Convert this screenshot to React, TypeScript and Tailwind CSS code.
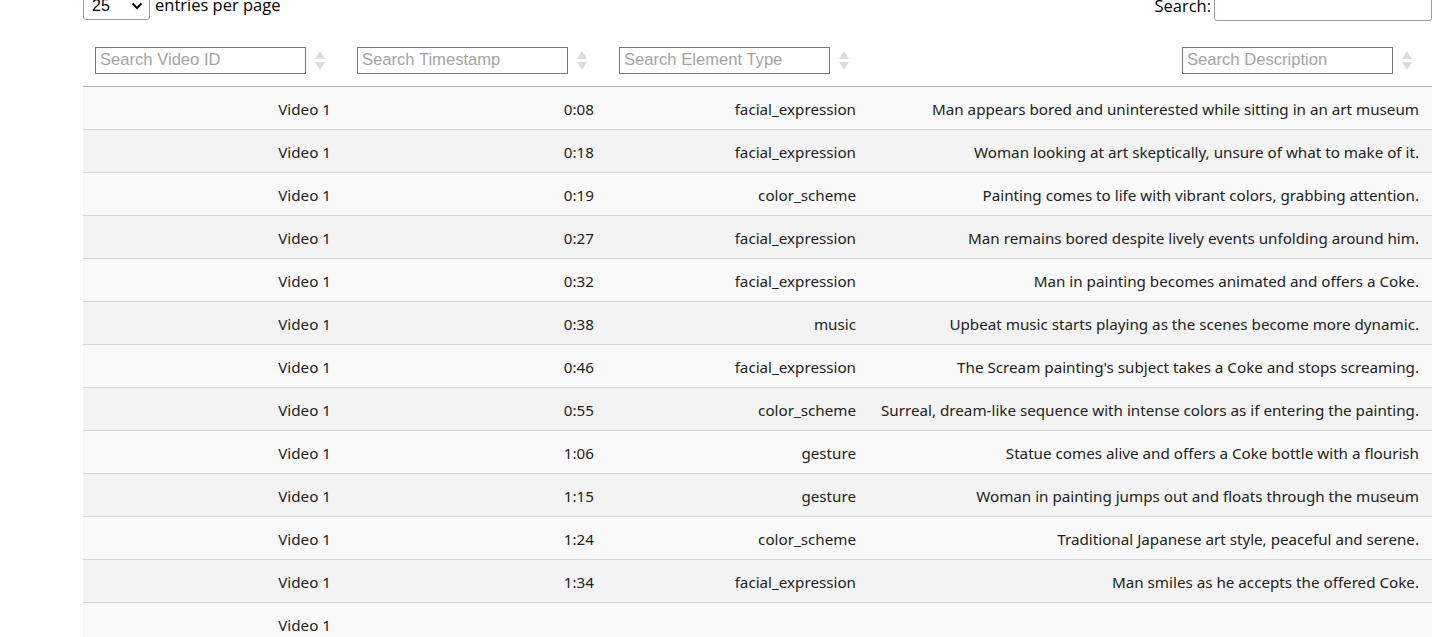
import React from 'react';

// Rows du tableau
const ROWS = [
  { video: 'Video 1', time: '0:08', type: 'facial_expression', desc: 'Man appears bored and uninterested while sitting in an art museum' },
  { video: 'Video 1', time: '0:18', type: 'facial_expression', desc: 'Woman looking at art skeptically, unsure of what to make of it.' },
  { video: 'Video 1', time: '0:19', type: 'color_scheme', desc: 'Painting comes to life with vibrant colors, grabbing attention.' },
  { video: 'Video 1', time: '0:27', type: 'facial_expression', desc: 'Man remains bored despite lively events unfolding around him.' },
  { video: 'Video 1', time: '0:32', type: 'facial_expression', desc: 'Man in painting becomes animated and offers a Coke.' },
  { video: 'Video 1', time: '0:38', type: 'music', desc: 'Upbeat music starts playing as the scenes become more dynamic.' },
  { video: 'Video 1', time: '0:46', type: 'facial_expression', desc: "The Scream painting's subject takes a Coke and stops screaming." },
  { video: 'Video 1', time: '0:55', type: 'color_scheme', desc: 'Surreal, dream-like sequence with intense colors as if entering the painting.' },
  { video: 'Video 1', time: '1:06', type: 'gesture', desc: 'Statue comes alive and offers a Coke bottle with a flourish' },
  { video: 'Video 1', time: '1:15', type: 'gesture', desc: 'Woman in painting jumps out and floats through the museum' },
  { video: 'Video 1', time: '1:24', type: 'color_scheme', desc: 'Traditional Japanese art style, peaceful and serene.' },
  { video: 'Video 1', time: '1:34', type: 'facial_expression', desc: 'Man smiles as he accepts the offered Coke.' },
  { video: 'Video 1', time: '', type: '', desc: '' },
];

const HEADERS = [
  { placeholder: 'Search Video ID', width: 'w-[262px]' },
  { placeholder: 'Search Timestamp', width: 'w-[262px]' },
  { placeholder: 'Search Element Type', width: 'w-[262px]' },
  { placeholder: 'Search Description', width: 'w-[563px]' },
];

const SortIcon = () => (
  <svg width="10" height="19" viewBox="0 0 10 19" className="shrink-0">
    <polygon points="5,0 10,8 0,8" fill="#dcdcdc" />
    <polygon points="0,11 10,11 5,19" fill="#dcdcdc" />
  </svg>
);

export default function App() {
  return (
    <div className="bg-white min-h-screen overflow-hidden">
      <div className="ml-[83px] w-[1349px] -mt-[9px]">
        {/* Barre du haut */}
        <div className="flex items-start justify-between h-[30px] font-['Liberation_Sans',Arial,sans-serif] text-[16px] text-black">
          <div className="flex items-center gap-[5px]">
            <div className="flex items-center justify-between w-[67px] h-[29px] border border-[#a0a0a0] rounded-[3px] pl-[8px] pr-[6px] bg-white">
              <span>25</span>
              <svg width="12" height="8" viewBox="0 0 12 8">
                <path d="M1.5 1.5 L6 6 L10.5 1.5" stroke="#111" strokeWidth="2" fill="none" />
              </svg>
            </div>
            <span className="font-['Open_Sans',sans-serif] text-[16.5px]">entries per page</span>
          </div>
          <div className="flex items-center gap-[3px]">
            <span className="font-['Open_Sans',sans-serif] text-[16.5px]">Search:</span>
            <div className="w-[218px] h-[30px] border border-[#a0a0a0] rounded-[3px] bg-white" />
          </div>
        </div>

        <table className="table-fixed border-collapse w-[1349px]">
          <thead>
            <tr className="border-b border-[#b4b4b4]">
              {HEADERS.map((h) => (
                <th key={h.placeholder} className={`${h.width} h-[65px] p-0 pt-[14px]`}>
                  <div className="flex items-center justify-end gap-[9px] pr-[20px]">
                    <input
                      readOnly
                      placeholder={h.placeholder}
                      className="w-[211px] h-[27px] border border-[#767676] px-[4px] text-[16.6px] font-['Liberation_Sans',Arial,sans-serif] font-normal placeholder:text-[#a4a4a4] outline-none"
                    />
                    <SortIcon />
                  </div>
                </th>
              ))}
            </tr>
          </thead>
          <tbody className="font-['Noto_Sans',sans-serif] text-[15.2px] text-[#222]">
            {ROWS.map((r, i) => (
              <tr key={i} className={`h-[43px] border-b border-[#d6d6d6] ${i % 2 === 0 ? 'bg-[#f9f9f9]' : 'bg-[#f3f3f3]'}`}>
                <td className="text-right pr-[14px] p-0 pt-[3px]">{r.video}</td>
                <td className="text-right pr-[13px] p-0 pt-[3px]">{r.time}</td>
                <td className="text-right pr-[13px] p-0 pt-[3px]">{r.type}</td>
                <td className="text-right pr-[13px] p-0 pt-[3px] whitespace-nowrap">{r.desc}</td>
              </tr>
            ))}
          </tbody>
        </table>
      </div>
    </div>
  );
}
